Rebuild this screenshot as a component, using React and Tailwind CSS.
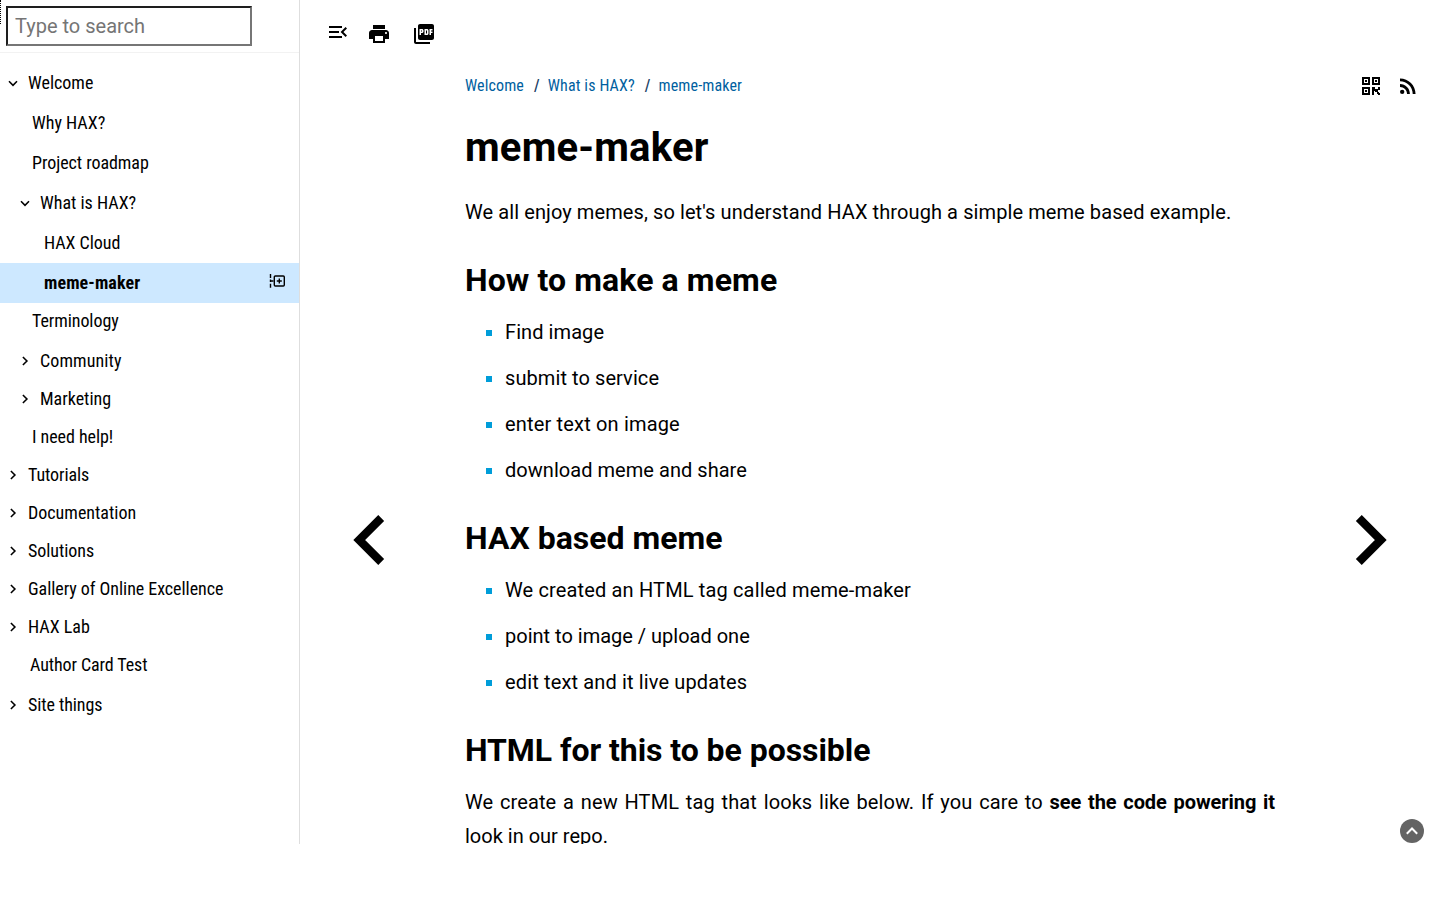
import React from "react";
import { MdMenuOpen, MdPrint, MdPictureAsPdf } from "react-icons/md";

const navItems = [
  { label: "Welcome", state: "open", row: "h-10 pl-[5px]" },
  { label: "Why HAX?", row: "h-10 pl-8" },
  { label: "Project roadmap", row: "h-10 pl-8 tracking-[-0.05px]" },
  { label: "What is HAX?", state: "open", row: "h-10 pl-[17px]" },
  { label: "HAX Cloud", row: "h-10 pl-11 tracking-[-0.05px]" },
  { label: "meme-maker", active: true, row: "h-10 pl-11 bg-[#cde8ff] font-bold tracking-[0.1px]" },
  { label: "Terminology", row: "h-9 mb-[3px] pl-8 tracking-[-0.07px]" },
  { label: "Community", state: "closed", row: "h-[38px] pl-[17px] tracking-[0.1px]" },
  { label: "Marketing", state: "closed", row: "h-[38px] pl-[17px]" },
  { label: "I need help!", row: "h-[38px] pl-8 tracking-[-0.05px]" },
  { label: "Tutorials", state: "closed", row: "h-[38px] pl-[5px] tracking-[-0.1px]" },
  { label: "Documentation", state: "closed", row: "h-[38px] pl-[5px]" },
  { label: "Solutions", state: "closed", row: "h-[38px] pl-[5px] tracking-[-0.05px]" },
  { label: "Gallery of Online Excellence", state: "closed", row: "h-[38px] pl-[5px] tracking-[-0.05px]" },
  { label: "HAX Lab", state: "closed", row: "h-[38px] pl-[5px]" },
  { label: "Author Card Test", row: "h-[38px] pl-[30px] tracking-[-0.1px]" },
  { label: "Site things", state: "closed", row: "mt-0.5 h-[38px] pl-[5px] tracking-[-0.08px]" },
];

function Chevron({ state }) {
  return (
    <svg viewBox="0 0 16 16" className="mr-[7px] size-4 shrink-0" fill="none" stroke="currentColor" strokeWidth="1.6">
      {state === "open" ? <path d="M4 6.300L8 10.300L12 6.300" /> : <path d="M5.900 4L9.900 8L5.900 12" />}
    </svg>
  );
}

function AddPageIcon() {
  return (
    <svg viewBox="0 0 16 14" className="mb-1 h-3.5 w-4" fill="none" stroke="#000" strokeWidth="1.4">
      <path d="M1.500 0v4M1.500 5.500v2.500M1.500 9.800v4M2 7h2.500" />
      <rect x="5.300" y="2" width="10" height="10" rx="1" />
      <path d="M10.300 4.500v5M7.800 7h5" />
    </svg>
  );
}

function QrIcon() {
  return (
    <svg viewBox="0 0 24 24" className="size-6" fill="currentColor">
      <path d="M3 11h8V3H3v8zm2-6h4v4H5V5zM3 21h8v-8H3v8zm2-6h4v4H5v-4zM13 3v8h8V3h-8zm6 6h-4V5h4v4zM6 6h2v2H6zM16 6h2v2h-2zM6 16h2v2H6zM13 13h3v2h3v-2h2v3h-2v2h-3v-1h-1v4h-2zM18 18h2v1h1v2h-2v-1h-1z" />
    </svg>
  );
}

function RssIcon() {
  return (
    <svg viewBox="0 0 24 24" className="size-6" fill="currentColor">
      <circle cx="6.18" cy="17.82" r="2.18" />
      <path d="M4 4.44v2.83c7.03 0 12.73 5.7 12.73 12.73h2.83c0-8.59-6.97-15.56-15.56-15.56zm0 5.66v2.83c3.9 0 7.07 3.17 7.07 7.07h2.83c0-5.47-4.43-9.9-9.9-9.9z" />
    </svg>
  );
}

function Bullets({ items }) {
  return (
    <ul className="pb-3">
      {items.map(([text, tracking]) => (
        <li key={text} className={`mb-3 flex h-[34px] items-center pl-[21px] ${tracking}`}>
          <span className="mt-0.5 mr-[13px] size-1.5 bg-[#009dd9]" />
          {text}
        </li>
      ))}
    </ul>
  );
}

const condensed = "font-['Roboto_Condensed',Roboto,sans-serif] [font-stretch:75%]";
const heading = "mb-[15px] text-[32px] leading-10 font-bold";

export default function App() {
  return (
    <div className="h-[900px] overflow-hidden bg-white font-['Roboto',sans-serif] text-black">
      <div className="relative flex h-[844px] overflow-hidden">
        <aside className="w-[300px] shrink-0 border-r border-[#dedede]">
          <div className="h-[53px] border-b border-[#f2f2f2] pt-1.5 pl-1.5">
            <input
              placeholder="Type to search"
              className="block h-10 w-[246px] border-2 border-t-[#1e1e1e] border-r-[#767676] border-b-[#767676] border-l-[#1e1e1e] px-[7px] text-xl placeholder:text-[#757575]"
            />
          </div>
          <nav className={`pt-2.5 text-lg ${condensed}`}>
            {navItems.map((n) => (
              <div key={n.label} className={`flex items-center ${n.row}`}>
                {n.state && <Chevron state={n.state} />}
                <span className="whitespace-nowrap">{n.label}</span>
                {n.active && (
                  <span className="mr-3.5 ml-auto">
                    <AddPageIcon />
                  </span>
                )}
              </div>
            ))}
          </nav>
        </aside>
        <main className="flex min-w-0 flex-1 flex-col">
          <header className="flex h-[60px] shrink-0 items-start pt-5 pl-[26px]">
            <MdMenuOpen className="size-6" />
            <MdPrint className="mt-0.5 ml-[17px] size-6" />
            <MdPictureAsPdf className="mt-0.5 ml-[21px] size-6" />
          </header>
          <div className="flex">
            <div className="flex w-[165px] shrink-0 justify-center pt-[454px] pr-[27px]">
              <svg viewBox="0 0 32 52" className="h-[52px] w-8">
                <path d="M28.200 4L6.200 26L28.200 48" fill="none" stroke="#000" strokeWidth="8.300" />
              </svg>
            </div>
            <article className="w-[810px] shrink-0 text-xl leading-[34px]">
              <div className={`flex h-[52px] items-center text-base tracking-[0.13px] text-[#005fa0] ${condensed}`}>
                <span>Welcome</span>
                <span className="mr-2 ml-2.5 font-medium text-[#1a3f66]">/</span>
                <span>What is HAX?</span>
                <span className="mr-2 ml-2.5 font-medium text-[#1a3f66]">/</span>
                <span>meme-maker</span>
              </div>
              <h1 className="mt-[11px] text-[40px] leading-[50px] font-bold tracking-[0.2px]">meme-maker</h1>
              <p className="mt-[22px] tracking-[0.09px]">We all enjoy memes, so let's understand HAX through a simple meme based example.</p>
              <h2 className={`mt-[31px] tracking-[0.1px] ${heading}`}>How to make a meme</h2>
              <Bullets
                items={[
                  ["Find image", "tracking-[0.08px]"],
                  ["submit to service", "tracking-[0.08px]"],
                  ["enter text on image", "tracking-[0.17px]"],
                  ["download meme and share", "tracking-[0.04px]"],
                ]}
              />
              <h2 className={`mt-[7px] ${heading}`}>HAX based meme</h2>
              <Bullets
                items={[
                  ["We created an HTML tag called meme-maker", "tracking-[0.15px]"],
                  ["point to image / upload one", ""],
                  ["edit text and it live updates", "tracking-[0.14px]"],
                ]}
              />
              <h2 className={`mt-[7px] tracking-[-0.05px] ${heading}`}>HTML for this to be possible</h2>
              <p className="text-justify">
                <span className="tracking-[0.09px]">We create a new HTML tag that looks like below. If you care to </span>
                <b className="tracking-[-0.05px]">see the code powering it</b> look in our repo.
              </p>
            </article>
            <div className="flex flex-1 flex-col">
              <div className="flex h-[52px] items-center justify-end gap-[13px] pr-5">
                <QrIcon />
                <RssIcon />
              </div>
              <svg viewBox="0 0 32 52" className="mt-[402px] ml-20 h-[52px] w-8">
                <path d="M3.800 4L25.800 26L3.800 48" fill="none" stroke="#000" strokeWidth="8.300" />
              </svg>
            </div>
          </div>
        </main>
        <button className="absolute right-4 bottom-px flex size-6 items-center justify-center rounded-full bg-[#646464]">
          <svg viewBox="0 0 24 24" className="size-6" fill="none" stroke="#fff" strokeWidth="2">
            <path d="M6.800 14.700L12 9.500l5.200 5.200" />
          </svg>
        </button>
        <div className="absolute top-0 left-0 h-6 w-px border-l border-dotted border-black" />
      </div>
    </div>
  );
}
